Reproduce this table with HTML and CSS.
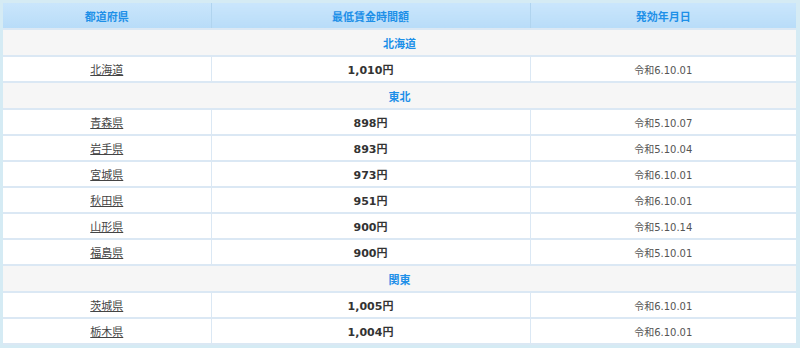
FILE: index.html
```html
<!DOCTYPE html>
<html lang="ja">
<head>
<meta charset="utf-8">
<link rel="stylesheet" href="styles.css">
</head>
<body>
<div class="frame">
<table class="wage">
  <colgroup><col class="c1"><col class="c2"><col class="c3"></colgroup>
  <thead>
    <tr><th>都道府県</th><th>最低賃金時間額</th><th>発効年月日</th></tr>
  </thead>
  <tbody>
    <tr class="group"><td colspan="3">北海道</td></tr>
    <tr><td><a href="#">北海道</a></td><td class="amt">1,010円</td><td class="date">令和6.10.01</td></tr>
    <tr class="group"><td colspan="3">東北</td></tr>
    <tr><td><a href="#">青森県</a></td><td class="amt">898円</td><td class="date">令和5.10.07</td></tr>
    <tr><td><a href="#">岩手県</a></td><td class="amt">893円</td><td class="date">令和5.10.04</td></tr>
    <tr><td><a href="#">宮城県</a></td><td class="amt">973円</td><td class="date">令和6.10.01</td></tr>
    <tr><td><a href="#">秋田県</a></td><td class="amt">951円</td><td class="date">令和6.10.01</td></tr>
    <tr><td><a href="#">山形県</a></td><td class="amt">900円</td><td class="date">令和5.10.14</td></tr>
    <tr><td><a href="#">福島県</a></td><td class="amt">900円</td><td class="date">令和5.10.01</td></tr>
    <tr class="group"><td colspan="3">関東</td></tr>
    <tr><td><a href="#">茨城県</a></td><td class="amt">1,005円</td><td class="date">令和6.10.01</td></tr>
    <tr><td><a href="#">栃木県</a></td><td class="amt">1,004円</td><td class="date">令和6.10.01</td></tr>
  </tbody>
</table>
</div>
</body>
</html>
```
FILE: styles.css
```css
html, body {
  margin: 0;
  padding: 0;
  background: #d5ebf4;
}
.frame {
  padding: 3px 3px 0 3px;
}
.wage {
  width: 793px;
  border-collapse: collapse;
  table-layout: fixed;
  font-family: "DejaVu Sans", "Noto Sans CJK JP", sans-serif;
  background: #fff;
  border-bottom: 2px solid #dbe8f4;
}
.c1 { width: 208px; }
.c2 { width: 319px; }
.c3 { width: 266px; }
.wage th {
  height: 25px;
  padding: 0;
  font-size: 11px;
  font-weight: bold;
  color: #1e90e8;
  background: linear-gradient(#cae6fc, #b8dcf8);
  border-right: 1px solid #b0d4ef;
}
.wage th:last-child { border-right: 0; }
.wage td {
  height: 24px;
  padding: 0;
  text-align: center;
  font-size: 11px;
  color: #333;
  border: 1px solid #dbe8f4;
  border-width: 2px 1px 0 1px;
}
.wage td:first-child { border-left: 0; }
.wage td:last-child { border-right: 0; }
.wage tr.group td {
  height: 25px;
  background: #f6f6f6;
  color: #1e90e8;
  font-weight: bold;
}
.wage a {
  color: #444;
  text-decoration: underline;
}
.wage td.amt {
  font-weight: bold;
  font-size: 11px;
  color: #333;
}
.wage td.date {
  font-size: 10px;
  color: #555;
}
```
